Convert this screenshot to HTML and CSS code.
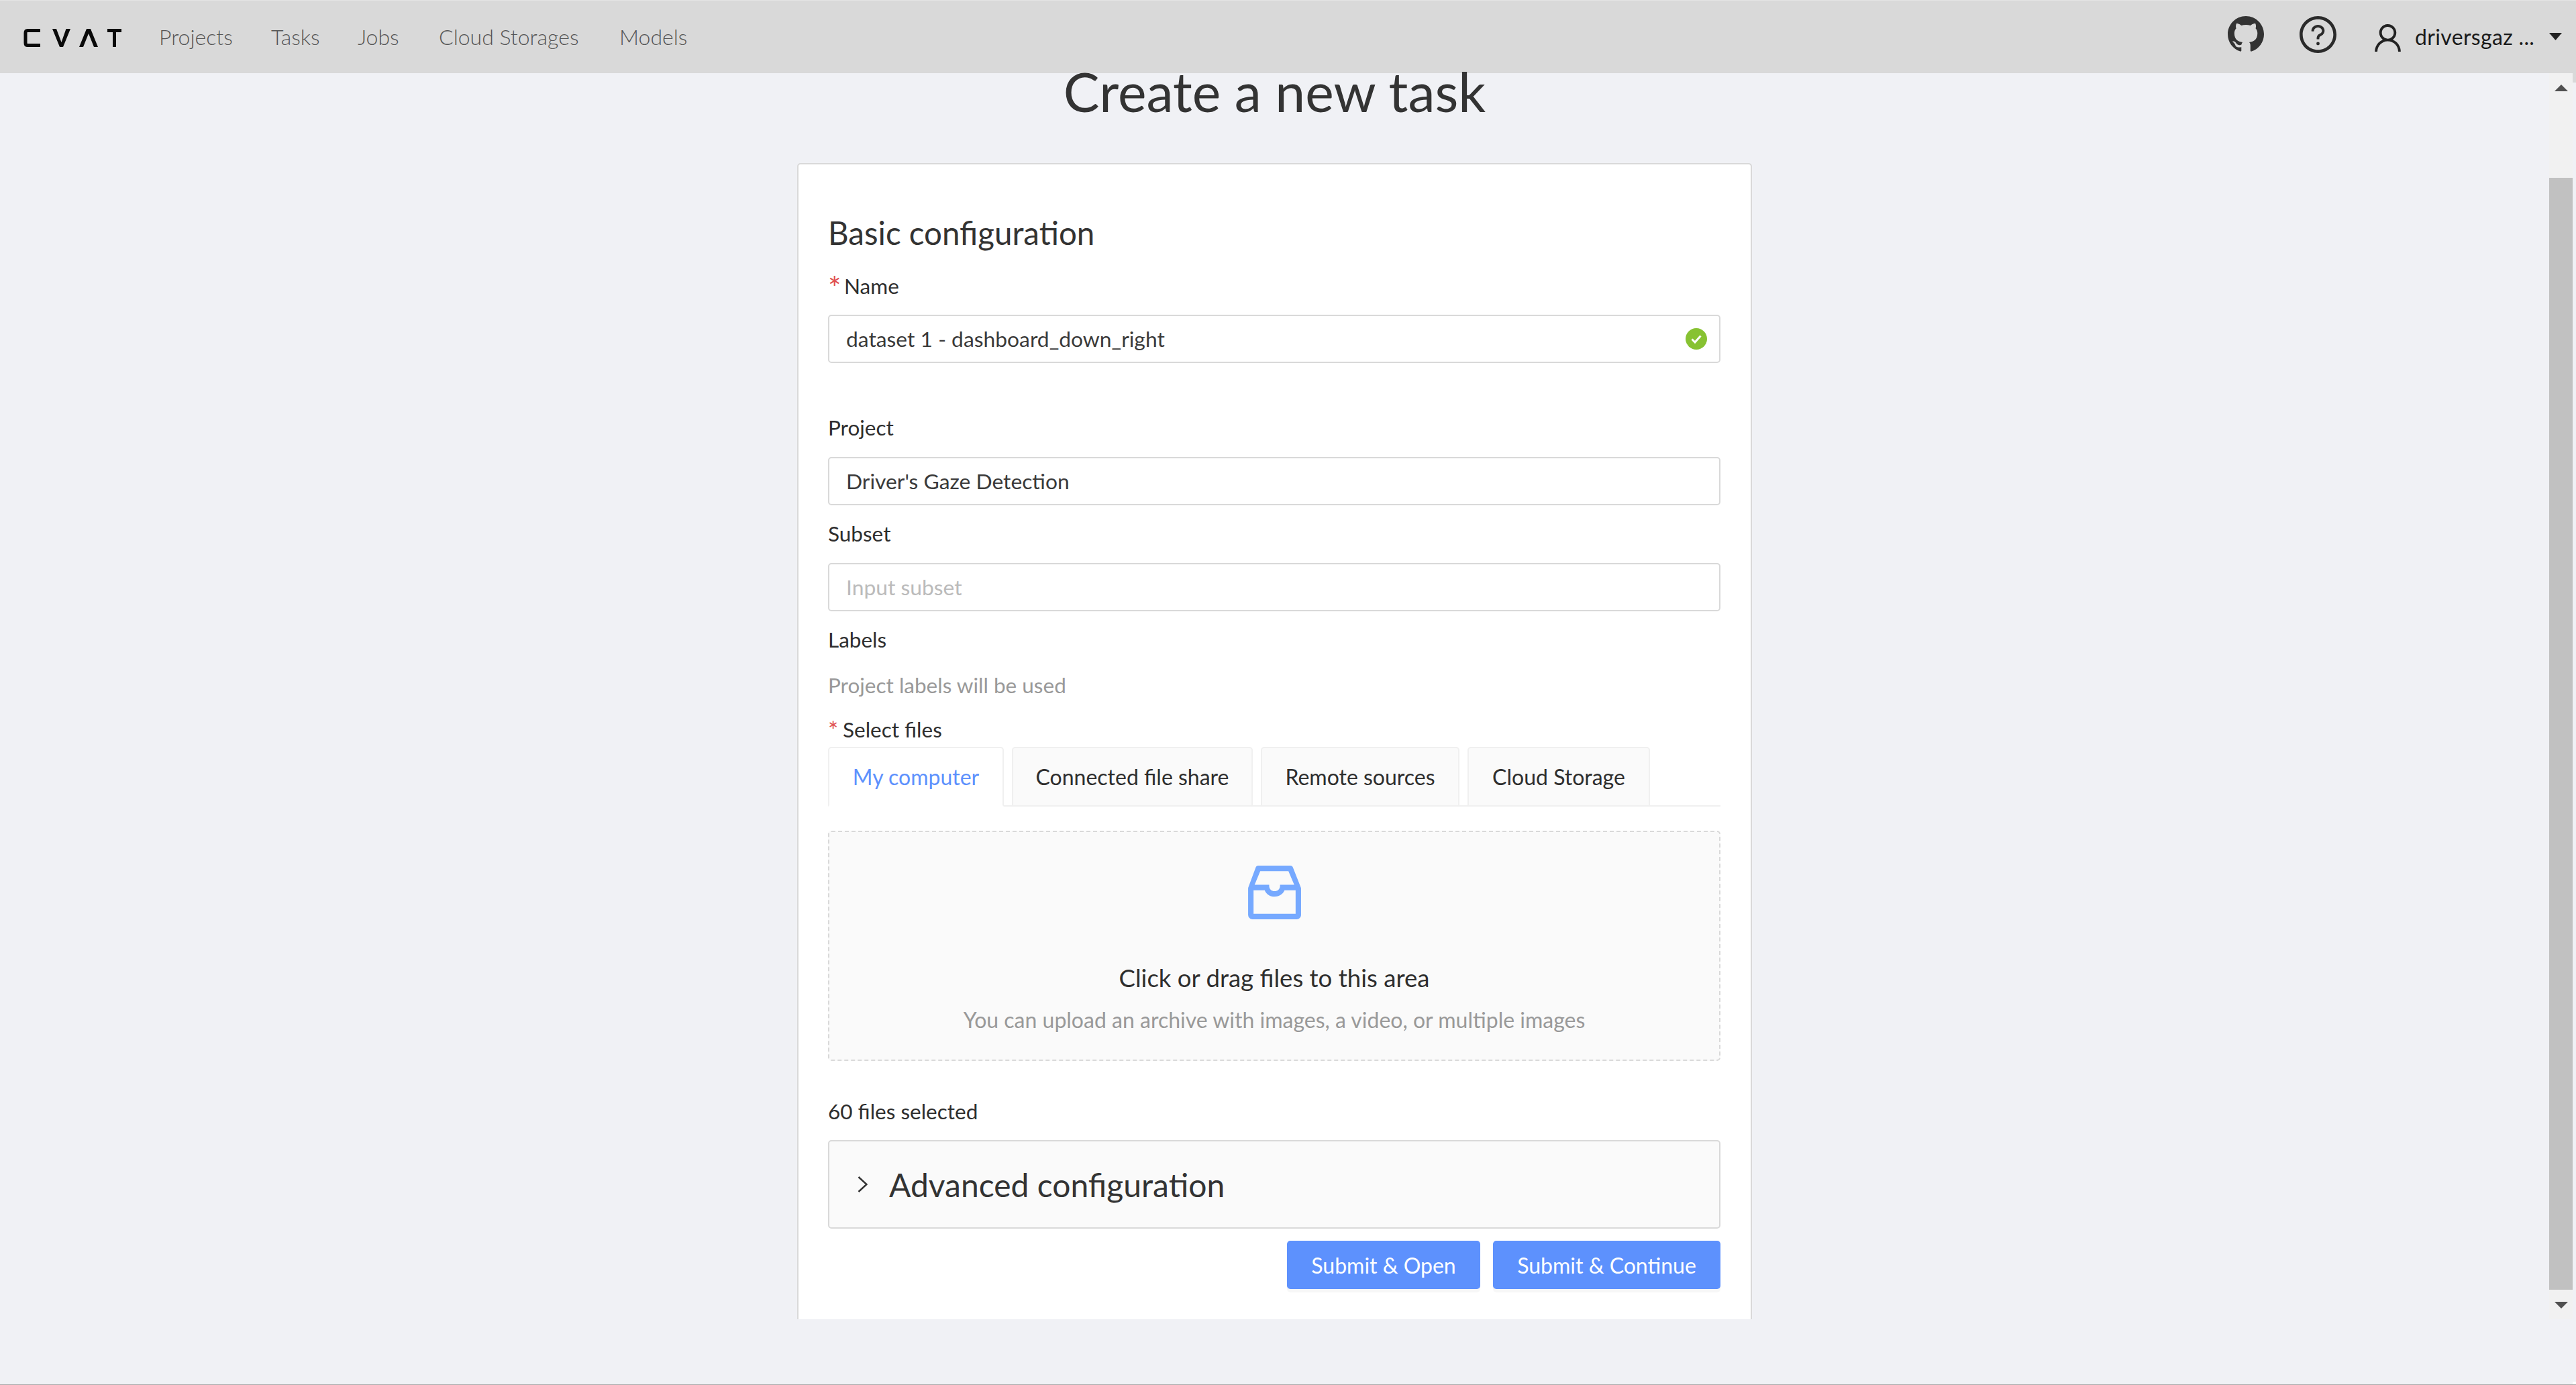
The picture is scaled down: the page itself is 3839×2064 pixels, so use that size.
FILE: index.html
```html
<!DOCTYPE html>
<html lang="en">
<head>
    <meta charset="UTF-8">
    <title>CVAT - Create a new task</title>
    <link rel="stylesheet" href="styles.css">
</head>
<body>
    <header class="topbar">
        <svg class="logo" viewBox="0 0 146 27" aria-label="CVAT">
            <path class="logo-c" d="M25 2.500H6Q3 2.500 3 6V21Q3 24.500 6 24.500H25"/>
            <path class="logo-fill" d="M43 0H49L56.500 20L63.500 0H70L59 27H54Z"/>
            <path class="logo-fill" d="M83 27H89L97 7L105 27H111L100 0H94Z"/>
            <path class="logo-fill" d="M125 0H146V5H138V27H133V5H125Z"/>
        </svg>
        <nav class="topnav">
            <a class="nav-projects">Projects</a>
            <a class="nav-tasks">Tasks</a>
            <a class="nav-jobs">Jobs</a>
            <a class="nav-storages">Cloud Storages</a>
            <a>Models</a>
        </nav>
        <div class="topbar-right">
            <svg class="icon-github" viewBox="0 0 16 16"><path d="M8 0C3.58 0 0 3.58 0 8c0 3.54 2.29 6.53 5.47 7.59.4.07.55-.17.55-.38 0-.19-.01-.82-.01-1.49-2.01.37-2.53-.49-2.69-.94-.09-.23-.48-.94-.82-1.13-.28-.15-.68-.52-.01-.53.63-.01 1.08.58 1.23.82.72 1.21 1.87.87 2.33.66.07-.52.28-.87.51-1.07-1.78-.2-3.64-.89-3.64-3.95 0-.87.31-1.59.82-2.15-.08-.2-.36-1.02.08-2.12 0 0 .67-.21 2.2.82.64-.18 1.32-.27 2-.27.68 0 1.36.09 2 .27 1.53-1.04 2.2-.82 2.2-.82.44 1.1.16 1.92.08 2.12.51.56.82 1.27.82 2.15 0 3.07-1.87 3.75-3.65 3.95.29.25.54.73.54 1.48 0 1.07-.01 1.93-.01 2.2 0 .21.15.46.55.38A8.013 8.013 0 0016 8c0-4.42-3.58-8-8-8z"/></svg>
            <svg class="icon-help" viewBox="64 64 896 896"><path d="M512 64C264.600 64 64 264.600 64 512s200.600 448 448 448 448-200.600 448-448S759.400 64 512 64zm0 820c-205.400 0-372-166.600-372-372s166.600-372 372-372 372 166.600 372 372-166.600 372-372 372z"/><path d="M623.600 316.700C593.600 290.400 554 276 512 276s-81.600 14.500-111.600 40.700C369.200 344 352 380.700 352 420v7.600c0 4.400 3.600 8 8 8h48c4.400 0 8-3.600 8-8V420c0-44.100 43.100-80 96-80s96 35.900 96 80c0 31.100-22 59.600-56.100 72.700-21.200 8.100-39.200 22.300-52.100 40.900-13.100 19-19.900 41.800-19.900 64.900V620c0 4.400 3.600 8 8 8h48c4.400 0 8-3.600 8-8v-22.700a48.300 48.300 0 0 1 30.900-44.800c59-22.700 97.100-74.700 97.100-132.500.1-39.300-17.100-76-48.300-103.300z"/><path d="M472 732a40 40 0 1 0 80 0 40 40 0 1 0-80 0z"/></svg>
            <svg class="icon-user" viewBox="136 114 752 796"><path d="M858.500 763.600a374 374 0 0 0-80.600-119.500 375.630 375.630 0 0 0-119.500-80.600c-.4-.2-.8-.3-1.200-.5C719.500 518 760 444.700 760 362c0-137-111-248-248-248S264 225 264 362c0 82.700 40.500 156 102.800 201.100-.4.2-.8.3-1.200.5-44.800 18.900-85 46-119.500 80.600a375.630 375.630 0 0 0-80.600 119.500A371.700 371.700 0 0 0 136 901.800a8 8 0 0 0 8 8.200h60c4.400 0 7.900-3.500 8-7.800 2-77.200 33-149.500 87.800-204.300 56.700-56.700 132-87.900 212.200-87.900s155.500 31.200 212.200 87.900C779 752.700 810 825 812 902.200c.1 4.400 3.600 7.800 8 7.800h60a8 8 0 0 0 8-8.200c-1-47.800-10.900-94.300-29.500-138.200zM512 534c-45.900 0-89.100-17.900-121.600-50.400S340 407.900 340 362c0-45.900 17.900-89.100 50.400-121.600S466.100 190 512 190s89.100 17.900 121.600 50.400S684 316.100 684 362c0 45.900-17.900 89.100-50.400 121.600S557.900 534 512 534z"/></svg>
            <span class="username">driversgaz ...</span>
            <svg class="caret" viewBox="0 0 19 11"><path d="M0 0H19L9.500 11Z"/></svg>
        </div>
    </header>

    <div class="workspace">
        <main class="scroller">
            <h1 class="page-title">Create a new task</h1>
            <section class="card">
                <h2 class="card-title">Basic configuration</h2>

                <label class="field-label label-name"><span class="required">*</span>Name</label>
                <div class="input">
                    <span>dataset 1 - dashboard_down_right</span>
                    <svg class="icon-ok" viewBox="0 0 32 32"><circle cx="16" cy="16" r="16"/><path d="M9.500 16.500L14 21L22.500 11.500"/></svg>
                </div>

                <label class="field-label label-project">Project</label>
                <div class="input"><span>Driver's Gaze Detection</span></div>

                <label class="field-label label-next">Subset</label>
                <div class="input placeholder"><span>Input subset</span></div>

                <label class="field-label label-next">Labels</label>
                <p class="field-label muted">Project labels will be used</p>

                <label class="field-label label-files"><span class="required small">*</span>Select files</label>
                <div class="tabs">
                    <div class="tab active">My computer</div>
                    <div class="tab tab-second">Connected file share</div>
                    <div class="tab tab-third">Remote sources</div>
                    <div class="tab tab-fourth">Cloud Storage</div>
                </div>

                <div class="dropzone">
                    <svg class="icon-inbox" viewBox="137 133 750 758"><path d="M885.200 446.300l-.2-.8-112.200-285.100c-5-16.100-19.900-27.200-36.800-27.200H281.200c-17 0-32.100 11.300-36.900 27.600L139.400 443l-.3.700-.2.800c-1.300 4.900-1.700 9.900-1 14.800-.1 1.600-.2 3.200-.2 4.800V830a60.900 60.900 0 0 0 60.800 60.800h627.200c33.500 0 60.800-27.300 60.900-60.800V464.100c0-1.300 0-2.600-.1-3.700.4-4.900 0-9.600-1.300-14.100zm-295.800-43l-.3 15.700c-.8 44.900-31.800 75.100-77.100 75.100-22.100 0-41.100-7.100-54.800-20.600S436 441.200 435.600 419l-.3-15.700H229.500L309 210h399.200l81.700 193.300H589.400zm-375 76.800h157.300c24.300 57.100 76 90.800 140.400 90.800 33.700 0 65-9.400 90.300-27.200 22.200-15.600 39.500-37.400 50.700-63.600h156.500V814H214.400V480.100z"/></svg>
                    <p class="drop-text">Click or drag files to this area</p>
                    <p class="drop-hint">You can upload an archive with images, a video, or multiple images</p>
                </div>

                <p class="field-label files-count">60 files selected</p>

                <div class="collapse">
                    <svg class="chevron" viewBox="0 0 15 24"><path d="M1.500 1L13.500 12L1.500 23"/></svg>
                    <span>Advanced configuration</span>
                </div>

                <div class="actions">
                    <button class="btn btn-open">Submit &amp; Open</button>
                    <button class="btn">Submit &amp; Continue</button>
                </div>
            </section>
        </main>
        <div class="scrollbar">
            <div class="scroll-arrow"><svg viewBox="0 0 20 10"><path d="M10 0L20 10H0Z"/></svg></div>
            <div class="scroll-track"><div class="scroll-thumb"></div></div>
            <div class="scroll-arrow"><svg viewBox="0 0 20 10"><path d="M0 0H20L10 10Z"/></svg></div>
        </div>
        <div class="gutter"><div class="gutter-top"></div></div>
    </div>
    <div class="page-foot"><div class="foot-notch"></div></div>
</body>
</html>
```

FILE: styles.css
```css
* {
    box-sizing: border-box;
}

html, body {
    height: 100%;
}

body {
    margin: 0;
    display: flex;
    flex-direction: column;
    overflow: hidden;
    background: #f0f1f5;
    font-family: Lato, "Open Sans", sans-serif;
    font-size: 32px;
    font-weight: 300;
    color: #2e2e2e;
}

/* top bar */
.topbar {
    height: 109px;
    flex: none;
    display: flex;
    align-items: center;
    padding: 0 21px 0 35px;
    background: #d9d9d9;
    border-top: 1px solid #e4e4e4;
}

.logo {
    width: 146px;
    height: 27px;
    margin-top: 2px;
}

.logo-c {
    fill: none;
    stroke: #0a0a0a;
    stroke-width: 5;
}

.logo-fill {
    fill: #0a0a0a;
}

.topnav {
    display: flex;
    margin-left: 56px;
    color: #555;
    font-size: 32px;
    line-height: 44px;
}

.nav-projects { width: 167px; }
.nav-tasks { width: 129px; }
.nav-jobs { width: 121px; }
.nav-storages { width: 269px; }

.topbar-right {
    margin-left: auto;
    display: flex;
    align-items: center;
}

.icon-github {
    width: 54px;
    height: 54px;
    margin-top: -8px;
    fill: #333;
}

.icon-help {
    width: 55px;
    height: 55px;
    margin-left: 53px;
    margin-top: -8px;
    fill: #2a2a2a;
}

.icon-user {
    width: 39px;
    height: 41px;
    margin-left: 57px;
    margin-top: 3px;
    fill: #222;
}

.username {
    margin-left: 21px;
    font-weight: 400;
    letter-spacing: 0.35px;
    line-height: 44px;
    width: 200px;
    color: #1a1a1a;
}

.caret {
    width: 19px;
    height: 11px;
    margin-top: -2px;
    fill: #222;
}

/* scrolling area */
.workspace {
    height: 1857px;
    flex: none;
    display: flex;
}

.scroller {
    flex: 1;
}

.scrollbar {
    width: 35px;
    display: flex;
    flex-direction: column;
    background: #f1f1f1;
}

.gutter {
    width: 5px;
}

.gutter-top {
    height: 14px;
    background: #d9d9d9;
}

.scroll-arrow {
    height: 43px;
    display: grid;
    place-items: center;
}

.scroll-arrow svg {
    width: 20px;
    height: 10px;
    fill: #505050;
}

.scroll-track {
    flex: 1;
    padding-top: 113px;
}

.scroll-thumb {
    height: 1657px;
    background: #c1c1c1;
}

.page-foot {
    flex: 1;
    display: flex;
    justify-content: flex-end;
    align-items: flex-end;
    border-bottom: 1px solid #aaa;
}

.foot-notch {
    width: 5px;
    height: 4px;
    background: #fff;
}

/* form */
.page-title {
    margin: 0;
    height: 134px;
    text-align: center;
    font-size: 80.500px;
    font-weight: 400;
    line-height: 55px;
    color: #333;
}

.card {
    width: 1423px;
    margin: 0 auto;
    padding: 69px 45px 45px 44px;
    background: #fff;
    border: 2px solid #d9d9d9;
    border-bottom: 0;
    border-radius: 5px 5px 0 0;
}

.card-title {
    margin: 0;
    font-size: 47.500px;
    font-weight: 400;
    line-height: 66px;
    color: #333;
}

.field-label {
    display: block;
    margin: 0;
    font-size: 31.500px;
    line-height: 44px;
    font-weight: 400;
}

.label-name { margin: 24px 0 21px; }
.label-project { margin: 74px 0 22px; }
.label-next { margin: 20px 0 22px; }
.label-files { margin: 22px 0 4px; }

.required {
    display: inline-block;
    width: 24px;
    font-size: 46px;
    line-height: 0;
    vertical-align: -8px;
    color: #e04f4f;
}

.required.small {
    width: 22px;
    font-size: 36px;
    vertical-align: -3px;
}

.muted {
    margin-top: 24px;
    color: #999;
}

.input {
    height: 72px;
    display: flex;
    align-items: center;
    justify-content: space-between;
    padding: 0 18px 0 25px;
    border: 2px solid #d9d9d9;
    border-radius: 5px;
    font-size: 31.800px;
    font-weight: 400;
    color: #3a3a3a;
}

.placeholder {
    color: #bbb;
}

.icon-ok {
    width: 32px;
    height: 32px;
}

.icon-ok circle {
    fill: #87c232;
}

.icon-ok path {
    fill: none;
    stroke: #fff;
    stroke-width: 3;
}

.tabs {
    display: flex;
    gap: 12px;
    height: 89px;
    border-bottom: 2px solid #f0f0f0;
}

.tab {
    width: 262px;
    height: 89px;
    display: grid;
    place-items: center;
    background: #fafafa;
    border: 2px solid #f0f0f0;
    border-radius: 5px 5px 0 0;
    font-weight: 400;
}

.tab.active {
    background: #fff;
    border-bottom-color: #fff;
    color: #5d91fd;
}

.tab-second { width: 359px; }
.tab-third { width: 296px; }
.tab-fourth { width: 272px; }

.dropzone {
    height: 343px;
    margin-top: 36px;
    padding-top: 50px;
    background: #fafafa;
    border: 2px dashed #d9d9d9;
    border-radius: 5px;
    text-align: center;
}

.icon-inbox {
    display: block;
    width: 79px;
    height: 80px;
    margin: 0 auto;
    fill: #76a9ff;
}

.drop-text {
    margin: 62px 0 0;
    font-size: 36.600px;
    line-height: 50px;
    font-weight: 400;
}

.drop-hint {
    margin: 16px 0 0;
    line-height: 44px;
    font-weight: 400;
    color: #999;
}

.files-count {
    margin: 53px 0 21px;
}

.collapse {
    height: 132px;
    display: flex;
    align-items: center;
    padding-left: 42px;
    background: #fafafa;
    border: 2px solid #d9d9d9;
    border-radius: 5px;
    font-size: 48px;
    font-weight: 400;
    color: #333;
}

.chevron {
    width: 15px;
    height: 24px;
    margin-right: 32px;
    fill: none;
    stroke: #333;
    stroke-width: 2.500;
}

.actions {
    display: flex;
    justify-content: flex-end;
    gap: 19px;
    margin-top: 18px;
}

.btn {
    height: 72px;
    width: 339px;
    padding: 0;
    border: 0;
    border-radius: 5px;
    background: #5d91fd;
    box-shadow: 0 5px 0 rgba(0, 0, 0, 0.03);
    color: #fff;
    font: 400 32px Lato, "Open Sans", sans-serif;
}

.btn-open {
    width: 288px;
}
```
